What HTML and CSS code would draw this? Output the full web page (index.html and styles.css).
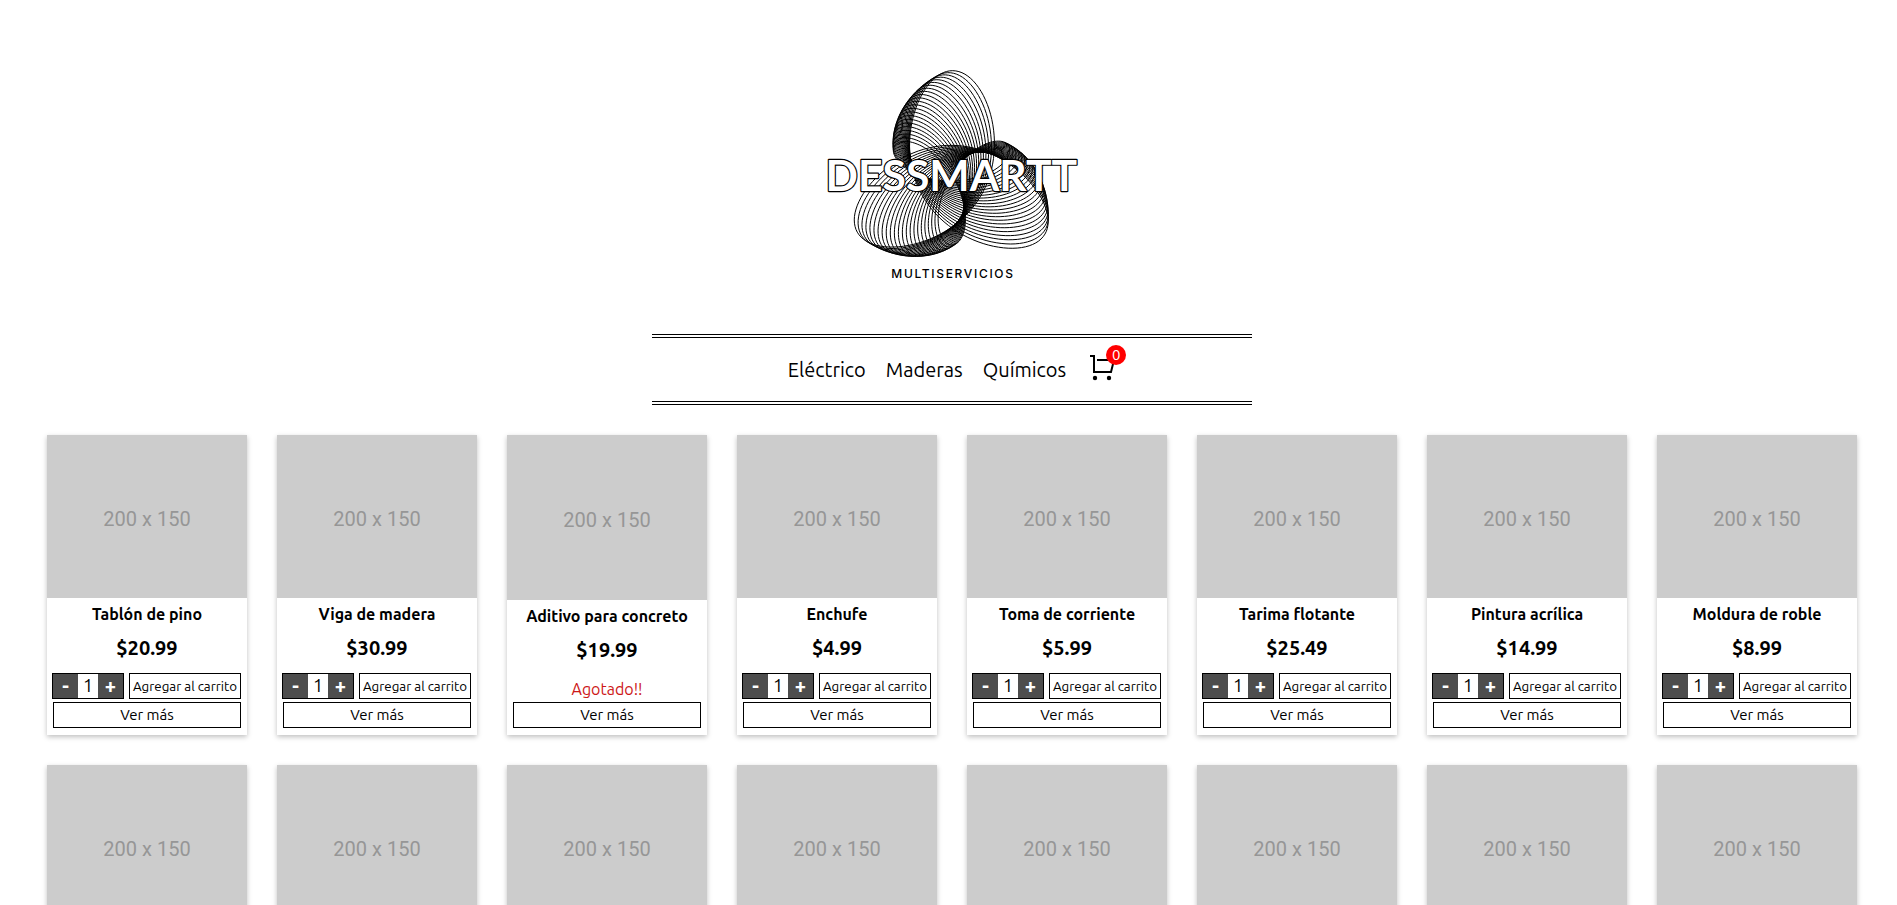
FILE: index.html
```html
<!DOCTYPE html>
<html lang="es">
<head>
<meta charset="utf-8">
<title>Dessmartt Multiservicios</title>
<link rel="stylesheet" href="styles.css">
</head>
<body>
<header class="header">
  <svg class="logo" viewBox="6 0 900 750" role="img" aria-label="Dessmartt Multiservicios">
    <g id="rings" class="rings"></g>
    <text class="logo-name" x="454" y="424">DESSMARTT</text>
    <text class="logo-sub" x="459" y="685">MULTISERVICIOS</text>
  </svg>
</header>
<nav class="nav">
  <a href="#electrico">Eléctrico</a>
  <a href="#maderas">Maderas</a>
  <a href="#quimicos">Químicos</a>
  <button class="cart" type="button" aria-label="Carrito">
    <svg class="cart-icon" viewBox="0 0 30 30" aria-hidden="true">
      <path d="M4 3H8V19H25L28 7H11" fill="none" stroke="#000" stroke-width="2"/>
      <circle cx="9" cy="25" r="2.200"/><circle cx="23" cy="25" r="2.200"/>
    </svg>
    <span class="badge">0</span>
  </button>
</nav>
<main class="products" id="products"></main>
<script src="app.js"></script>
</body>
</html>
```
FILE: styles.css
```css
* { box-sizing: border-box; }
body {
  margin: 0;
  padding-left: 7px;
  background: #fff;
  color: #000;
  font-family: Ubuntu, "Open Sans", sans-serif;
}
.header {
  display: flex;
  justify-content: center;
  padding: 50px 0 34px;
}
.logo { display: block; width: 300px; height: 250px; }
.rings { fill: none; stroke: #000; stroke-width: 3; }
.logo-name {
  font: 700 128px Lato, sans-serif;
  text-anchor: middle;
  fill: #fff;
  stroke: #000;
  stroke-width: 7px;
  stroke-linejoin: round;
  paint-order: stroke;
}
.logo-sub {
  font: 500 36px Inter, sans-serif;
  text-anchor: middle;
  letter-spacing: 5px;
}
.nav {
  display: flex;
  justify-content: center;
  align-items: center;
  gap: 20px;
  max-width: 600px;
  min-height: 71px;
  margin: 0 auto;
  border-top: 4px double #000;
  border-bottom: 4px double #000;
  font-size: 20px;
}
.nav a { color: #000; text-decoration: none; }
.cart {
  position: relative;
  width: 30px;
  height: 36px;
  padding: 0;
  border: 0;
  background: none;
}
.cart-icon { display: block; width: 30px; height: 30px; margin-bottom: 4px; }
.badge {
  position: absolute;
  top: -7px;
  right: -10px;
  width: 20px;
  border-radius: 50%;
  background: #f00;
  color: #fff;
  font: 15px/20px Ubuntu, "Open Sans", sans-serif;
  text-align: center;
}
.products {
  display: grid;
  grid-template-columns: repeat(auto-fill, 200px);
  justify-content: center;
  gap: 30px;
  padding: 30px 20px;
}
.card {
  display: flex;
  flex-direction: column;
  min-height: 300px;
  text-align: center;
  box-shadow: 0 2px 5px rgba(0, 0, 0, 0.25);
}
.photo {
  flex: 1;
  display: grid;
  place-items: center;
  padding-top: 4px;
  background: #ccc;
  color: #969696;
  font: 20px Roboto, sans-serif;
}
.name { margin: 0; font-size: 16px; line-height: 32px; }
.price { margin: 0 0 8px; font-size: 20px; font-weight: 700; line-height: 35px; }
.buy { display: flex; gap: 5px; padding: 0 6px 3px 5px; }
.counter { display: flex; width: 72px; height: 26px; border: 1px solid #000; }
.step {
  width: 25px;
  padding: 0;
  border: 0;
  background: #4d4d4d;
  color: #fff;
  font: 700 20px/24px Ubuntu, "Open Sans", sans-serif;
}
.amount { width: 20px; font-size: 18px; line-height: 22px; }
.add, .more {
  height: 26px;
  padding: 0;
  border: 1px solid #000;
  background: #fff;
  color: #000;
  font-family: inherit;
}
.add { flex: 1; white-space: nowrap; }
.more { margin: 0 6px 7px; font-size: 15px; line-height: 22px; }
.sold-out { margin: 0; padding-top: 2px; color: #cd1818; font-size: 16px; line-height: 25px; }
```
FILE: app.js
```
// Logo: a family of three-lobed curves, each one turned and shrunk a little more.
const rings = document.getElementById("rings");
const COUNT = 23;
for (let k = 0; k < COUNT; k++) {
  const u = k / (COUNT - 1);
  const a = 112 - 16 * u;
  const b = 205 - 103 * u;
  const c = 8 - 8 * u;
  const turn = 0.01 - 1.06 * u;
  let d = "";
  for (let i = 0; i < 180; i++) {
    const t = (i / 180) * Math.PI * 2;
    const x = a * Math.sin(t) - b * Math.sin(2 * t) + c * Math.sin(4 * t);
    const y = -a * Math.cos(t) - b * Math.cos(2 * t) - c * Math.cos(4 * t);
    const px = 455 + x * Math.cos(turn) - y * Math.sin(turn);
    const py = 387 + x * Math.sin(turn) + y * Math.cos(turn);
    d += (i ? "L" : "M") + px.toFixed(1) + " " + py.toFixed(1);
  }
  const path = document.createElementNS("http://www.w3.org/2000/svg", "path");
  path.setAttribute("d", d + "Z");
  rings.appendChild(path);
}

const items = [
  ["Tablón de pino", "$20.99"],
  ["Viga de madera", "$30.99"],
  ["Aditivo para concreto", "$19.99", true],
  ["Enchufe", "$4.99"],
  ["Toma de corriente", "$5.99"],
  ["Tarima flotante", "$25.49"],
  ["Pintura acrílica", "$14.99"],
  ["Moldura de roble", "$8.99"]
];
const card = ([name, price, soldOut]) => `
  <article class="card">
    <div class="photo">200 x 150</div>
    <h2 class="name">${name}</h2>
    <p class="price">${price}</p>
    ${soldOut ? `<p class="sold-out">Agotado!!</p>` : `
    <div class="buy">
      <div class="counter">
        <button class="step" type="button">-</button>
        <span class="amount">1</span>
        <button class="step" type="button">+</button>
      </div>
      <button class="add" type="button">Agregar al carrito</button>
    </div>`}
    <button class="more" type="button">Ver más</button>
  </article>`;
const plain = items.map(([name, price]) => [name, price]);
document.getElementById("products").innerHTML = [...items, ...plain].map(card).join("");
```
